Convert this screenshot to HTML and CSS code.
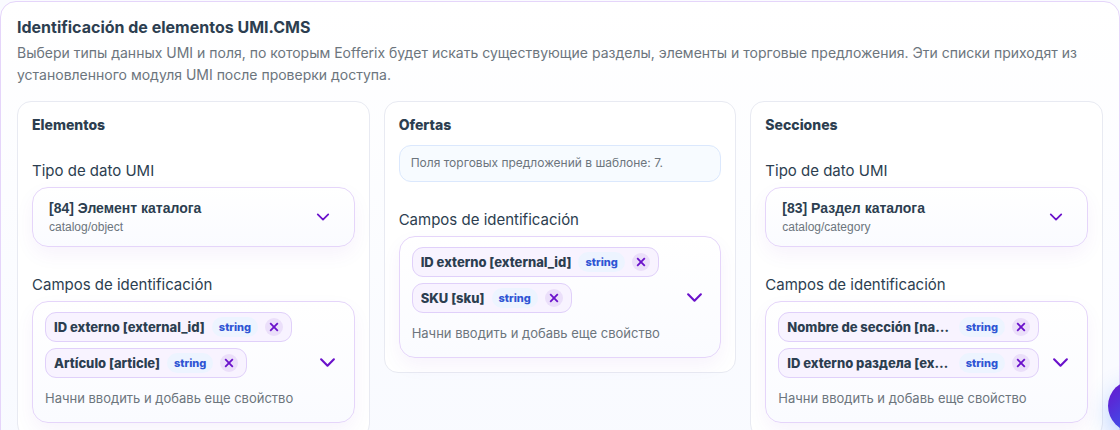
FILE: index.html
```html
<!DOCTYPE html>
<html lang="es">
<head>
  <meta charset="UTF-8">
  <meta name="viewport" content="width=device-width, initial-scale=1.0">
  <title>Identificación de elementos UMI.CMS</title>
  <link rel="stylesheet" href="styles.css">
</head>
<body>
  <svg class="sprite" aria-hidden="true">
    <symbol id="chevron" viewBox="0 0 16 16">
      <path d="M2 5l6 6 6-6" fill="none" stroke="currentColor" stroke-width="2" stroke-linecap="round" stroke-linejoin="round"/>
    </symbol>
    <symbol id="cross" viewBox="0 0 10 10">
      <path d="M1.2 1.2l7.6 7.6M8.8 1.2L1.2 8.8" fill="none" stroke="currentColor" stroke-width="1.8"/>
    </symbol>
  </svg>

  <main class="panel">
    <header class="panel-header">
      <h1>Identificación de elementos UMI.CMS</h1>
      <p>Выбери типы данных UMI и поля, по которым Eofferix будет искать существующие разделы, элементы и торговые предложения. Эти списки приходят из установленного модуля UMI после проверки доступа.</p>
    </header>

    <div class="columns">
      <section class="card">
        <h2>Elementos</h2>
        <div class="field">
          <label for="element-type">Tipo de dato UMI</label>
          <div class="select-box">
            <select id="element-type">
              <option>[84] Элемент каталога</option>
            </select>
            <span class="select-meta">catalog/object</span>
            <svg class="select-arrow"><use href="#chevron"/></svg>
          </div>
        </div>
        <div class="field">
          <label for="element-fields">Campos de identificación</label>
          <div class="multi">
            <div class="multi-values">
              <span class="chip">
                <span class="chip-text">ID externo [external_id]</span>
                <span class="chip-type">string</span>
                <button class="chip-remove" type="button" aria-label="Quitar ID externo"><svg><use href="#cross"/></svg></button>
              </span>
              <span class="chip">
                <span class="chip-text">Artículo [article]</span>
                <span class="chip-type">string</span>
                <button class="chip-remove" type="button" aria-label="Quitar Artículo"><svg><use href="#cross"/></svg></button>
              </span>
              <input id="element-fields" type="text" placeholder="Начни вводить и добавь еще свойство">
            </div>
            <button class="multi-toggle" type="button" aria-label="Abrir lista"><svg><use href="#chevron"/></svg></button>
          </div>
        </div>
      </section>

      <section class="card">
        <h2>Ofertas</h2>
        <div class="note">Поля торговых предложений в шаблоне: 7.</div>
        <div class="field">
          <label for="offer-fields">Campos de identificación</label>
          <div class="multi">
            <div class="multi-values">
              <span class="chip">
                <span class="chip-text">ID externo [external_id]</span>
                <span class="chip-type">string</span>
                <button class="chip-remove" type="button" aria-label="Quitar ID externo"><svg><use href="#cross"/></svg></button>
              </span>
              <span class="chip">
                <span class="chip-text">SKU [sku]</span>
                <span class="chip-type">string</span>
                <button class="chip-remove" type="button" aria-label="Quitar SKU"><svg><use href="#cross"/></svg></button>
              </span>
              <input id="offer-fields" type="text" placeholder="Начни вводить и добавь еще свойство">
            </div>
            <button class="multi-toggle" type="button" aria-label="Abrir lista"><svg><use href="#chevron"/></svg></button>
          </div>
        </div>
      </section>

      <section class="card">
        <h2>Secciones</h2>
        <div class="field">
          <label for="section-type">Tipo de dato UMI</label>
          <div class="select-box">
            <select id="section-type">
              <option>[83] Раздел каталога</option>
            </select>
            <span class="select-meta">catalog/category</span>
            <svg class="select-arrow"><use href="#chevron"/></svg>
          </div>
        </div>
        <div class="field">
          <label for="section-fields">Campos de identificación</label>
          <div class="multi">
            <div class="multi-values">
              <span class="chip">
                <span class="chip-text">Nombre de sección [name]</span>
                <span class="chip-type">string</span>
                <button class="chip-remove" type="button" aria-label="Quitar Nombre de sección"><svg><use href="#cross"/></svg></button>
              </span>
              <span class="chip">
                <span class="chip-text">ID externo раздела [external_id]</span>
                <span class="chip-type">string</span>
                <button class="chip-remove" type="button" aria-label="Quitar ID externo раздела"><svg><use href="#cross"/></svg></button>
              </span>
              <input id="section-fields" type="text" placeholder="Начни вводить и добавь еще свойство">
            </div>
            <button class="multi-toggle" type="button" aria-label="Abrir lista"><svg><use href="#chevron"/></svg></button>
          </div>
        </div>
      </section>
    </div>
  </main>

  <button class="help-button" type="button" aria-label="Ayuda"></button>
</body>
</html>
```

FILE: styles.css
```css
:root {
  --text-color: #2c3e50;
  --muted-color: #6c757d;
  --accent-color: #6a11cb;
  --accent-border: #e5d5fa;
  --card-border: #e8eaf2;
}

* {
  box-sizing: border-box;
}

html {
  scrollbar-width: none;
}

body {
  margin: 0;
  padding: 1px 0 16px;
  font-family: Inter, "Liberation Sans", sans-serif;
  font-size: 15px;
  line-height: 24px;
  color: var(--text-color);
  background: #fafbff;
}

.sprite {
  display: none;
}

.panel {
  padding: 16px;
  border: 1px solid var(--accent-border);
  border-radius: 16px;
  background: linear-gradient(180deg, #ffffff, #f8faff);
}

.panel-header {
  margin-bottom: 15px;
}

h1 {
  margin: 0 0 6px;
  font-size: 16px;
  line-height: 18px;
  font-weight: 700;
}

.panel-header p {
  margin: 0;
  font-size: 14px;
  line-height: 22px;
  color: var(--muted-color);
}

.columns {
  display: grid;
  grid-template-columns: repeat(3, minmax(0, 1fr));
  gap: 14px;
  align-items: start;
}

.card {
  display: grid;
  grid-template-columns: minmax(0, 1fr);
  gap: 12px;
  padding: 14px;
  border: 1px solid var(--card-border);
  border-radius: 14px;
  background: #ffffff;
}

h2 {
  margin: 0;
  font-size: 14px;
  line-height: 17px;
  font-weight: 800;
}

.note {
  padding: 8px 11px 10px;
  border: 1px solid #dbe8fd;
  border-radius: 12px;
  font-size: 12px;
  line-height: 17px;
  color: var(--muted-color);
  background: #f7fbff;
}

.field {
  display: grid;
  grid-template-columns: minmax(0, 1fr);
  gap: 4px;
  margin-top: 14px;
}

/* Select with a second line under the value */
.select-box {
  display: grid;
  grid-template-columns: minmax(0, 1fr) auto;
  align-items: center;
  border: 1px solid var(--accent-border);
  border-radius: 16px;
  background: linear-gradient(180deg, #ffffff, #fafbff);
  box-shadow: 0 8px 20px rgba(106, 17, 203, 0.05);
  font-family: "Liberation Sans", Arial, sans-serif;
}

.select-box select {
  grid-area: 1 / 1 / 2 / 3;
  width: 100%;
  height: 58px;
  padding: 0 48px 18px 16px;
  border: 0;
  border-radius: 16px;
  appearance: none;
  font: 700 14px "Liberation Sans", Arial, sans-serif;
  color: var(--text-color);
  background: transparent;
  cursor: pointer;
}

.select-meta {
  grid-area: 1 / 1 / 2 / 2;
  align-self: end;
  padding: 0 0 11px 16px;
  font-size: 12px;
  line-height: 16px;
  color: var(--muted-color);
  pointer-events: none;
}

.select-arrow {
  grid-area: 1 / 2 / 2 / 3;
  width: 14px;
  height: 14px;
  margin-right: 24px;
  color: var(--accent-color);
  pointer-events: none;
}

.multi {
  display: flex;
  align-items: center;
  gap: 6px;
  padding: 10px 10px 10px 12px;
  border: 1px solid var(--accent-border);
  border-radius: 16px;
  background: linear-gradient(180deg, #ffffff, #fafbff);
  box-shadow: 0 8px 20px rgba(106, 17, 203, 0.05);
}

.multi-values {
  display: flex;
  flex: 1;
  flex-wrap: wrap;
  gap: 6px;
  min-width: 0;
}

.chip {
  display: inline-flex;
  align-items: center;
  gap: 7px;
  max-width: 100%;
  height: 30px;
  padding: 0 8px;
  border: 1px solid #e0d0fa;
  border-radius: 11px;
  background: #f8f3ff;
}

.chip-text {
  flex: 1;
  overflow: hidden;
  font-size: 13px;
  line-height: 20px;
  font-weight: 800;
  text-overflow: ellipsis;
  white-space: nowrap;
}

.chip-type {
  flex: none;
  padding: 0 7px;
  border-radius: 10px;
  font-size: 11px;
  line-height: 20px;
  font-weight: 800;
  color: #2f55d4;
  background: #edf4ff;
}

.chip-remove {
  display: grid;
  place-items: center;
  flex: none;
  width: 18px;
  height: 18px;
  padding: 0;
  border: 0;
  border-radius: 50%;
  color: var(--accent-color);
  background: #ebdffa;
  cursor: pointer;
}

.chip-remove svg {
  width: 10px;
  height: 10px;
}

.multi input {
  width: 100%;
  height: 28px;
  padding: 0;
  border: 0;
  outline: 0;
  font: 400 13px Inter, "Liberation Sans", sans-serif;
  color: var(--text-color);
  background: transparent;
}

.multi input::placeholder {
  color: var(--muted-color);
}

.multi-toggle {
  display: grid;
  place-items: center;
  flex: none;
  width: 32px;
  height: 32px;
  padding: 0;
  border: 0;
  color: var(--accent-color);
  background: transparent;
  cursor: pointer;
}

.multi-toggle svg {
  width: 17px;
  height: 17px;
}

/* Floating button, partly past the window edge */
.help-button {
  position: fixed;
  right: -40px;
  bottom: -2px;
  width: 52px;
  height: 52px;
  border: 0;
  border-radius: 50%;
  background: linear-gradient(135deg, #6a11cb, #2575fc);
  box-shadow: 0 8px 24px rgba(37, 117, 252, 0.3);
  cursor: pointer;
}
```
